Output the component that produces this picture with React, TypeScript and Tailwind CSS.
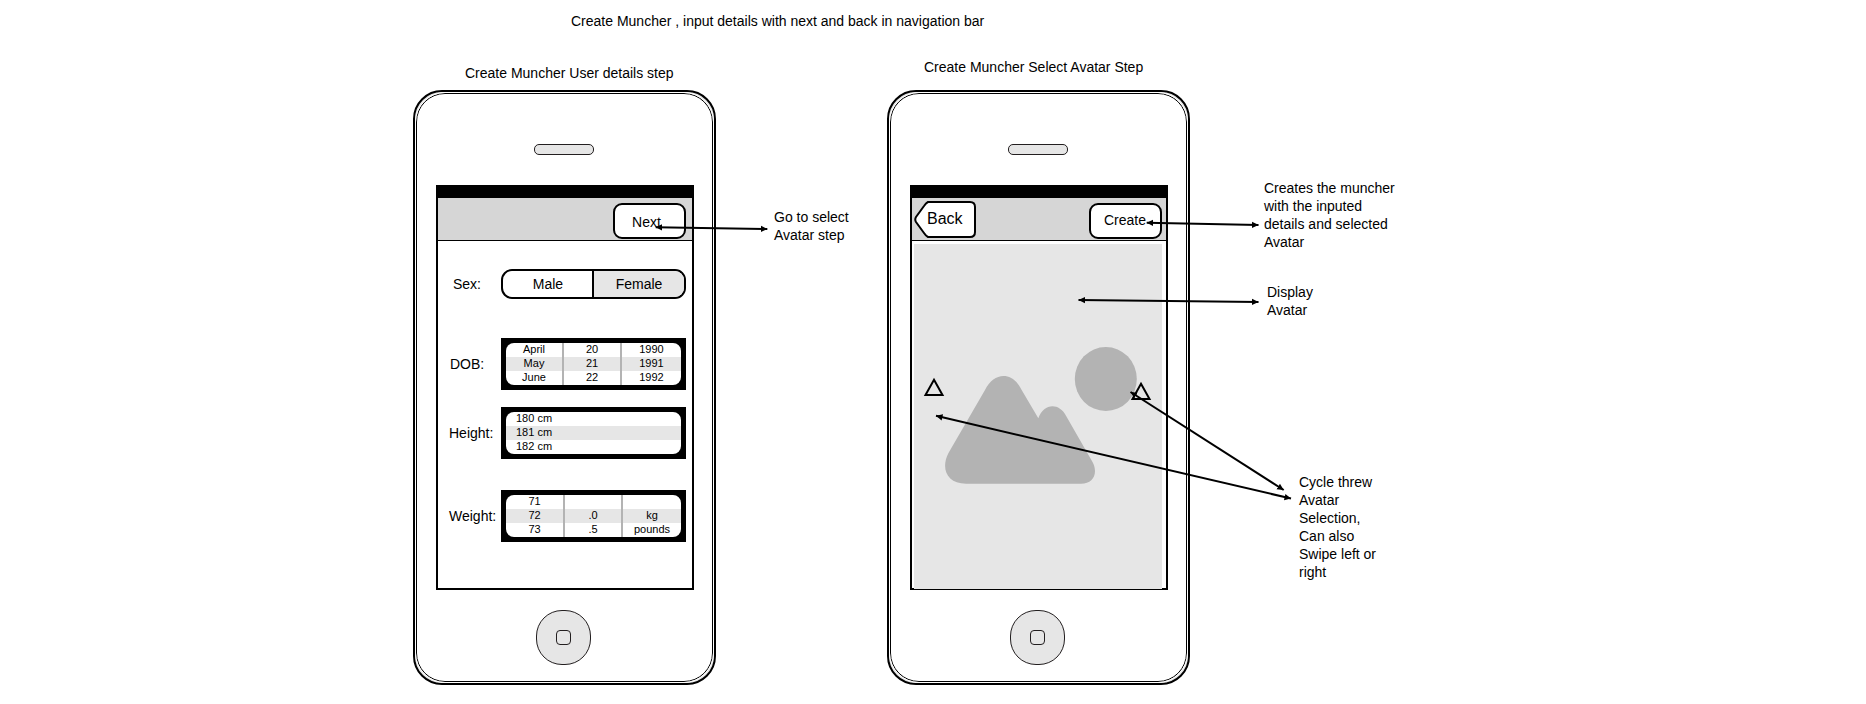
import type { ReactNode } from "react";

type Column = { width: string; align: string; values: string[] };

function Phone({ title, titleClass, children }: { title: string; titleClass: string; children: ReactNode }) {
  return (
    <section className="flex h-[627px] w-[303px] flex-col">
      <h2 className={"h-[18px] shrink-0 whitespace-nowrap " + titleClass}>{title}</h2>
      <div className="flex h-[595px] w-[303px] shrink-0 flex-col rounded-[29px] border-2 border-black bg-[#e6e6e6] p-px">
        <div className="flex flex-1 flex-col rounded-[29px] border border-black bg-white outline-1 outline-white">
          <div className="ml-[117px] mt-[50px] h-[11px] w-[60px] rounded-[5px] border border-[#231f20] bg-[#e6e6e6]" />
          <div className="ml-[19px] mt-[30px] flex h-[405px] w-[258px] flex-col border-2 border-black">
            <div className="h-[11px] shrink-0 bg-black" />
            {children}
          </div>
          <div className="ml-[119px] mt-[20px] flex size-[55px] items-center justify-center rounded-[26px] border border-[#231f20] bg-[#e6e6e6]">
            <div className="size-[15px] rounded-[4px] border border-[#231f20]" />
          </div>
        </div>
      </div>
    </section>
  );
}

function Row({ label, className, labelClass, children }: { label: string; className: string; labelClass: string; children: ReactNode }) {
  return (
    <div className={"flex shrink-0 items-center " + className}>
      <span className={"w-[63px] shrink-0 whitespace-nowrap " + labelClass}>{label}</span>
      {children}
    </div>
  );
}

function Picker({ columns }: { columns: Column[] }) {
  return (
    <div className="h-[52px] w-[185px] bg-black p-[5px]">
      <div className="flex h-[42px] overflow-hidden rounded-[8px] bg-white text-[11px] leading-[12px]">
        {columns.map((column, i) => (
          <div key={i} className={"shrink-0 border-[#b3b3b3] " + column.width + " " + column.align}>
            {column.values.map((value, j) => (
              <div key={j} className={j === 1 ? "h-[14px] bg-[#e6e6e6]" : "h-[14px]"}>
                {value}
              </div>
            ))}
          </div>
        ))}
      </div>
    </div>
  );
}

const dob: Column[] = [
  { width: "w-[58px] border-r-2", align: "text-center", values: ["April", "May", "June"] },
  { width: "w-[58px] border-r-2", align: "text-center", values: ["20", "21", "22"] },
  { width: "w-[59px]", align: "text-center", values: ["1990", "1991", "1992"] },
];
const height: Column[] = [
  { width: "w-[175px]", align: "indent-[10px]", values: ["180 cm", "181 cm", "182 cm"] },
];
const weight: Column[] = [
  { width: "w-[59px] border-r-2", align: "text-center", values: ["71", "72", "73"] },
  { width: "w-[58px] border-r-2", align: "text-center", values: ["", ".0", ".5"] },
  { width: "w-[58px]", align: "text-center", values: ["", "kg", "pounds"] },
];

const arrows = [
  [655.7, 227.3, 767.3, 229],
  [1146.7, 222.7, 1258.5, 225],
  [1078.5, 300, 1258.5, 302],
  [936, 415.8, 1291, 498.5],
  [1130.5, 392, 1283.7, 490],
];

function Arrows() {
  return (
    <svg className="pointer-events-none absolute left-0 top-0 z-20" width="1866" height="704">
      <defs>
        <marker id="head" markerUnits="userSpaceOnUse" markerWidth="7" markerHeight="8" refX="6.5" refY="4" orient="auto-start-reverse">
          <path d="M0 0.8L6.5 4L0 7.2Z" />
        </marker>
      </defs>
      {arrows.map(([x1, y1, x2, y2]) => (
        <line key={x1} x1={x1} y1={y1} x2={x2} y2={y2} stroke="#000" strokeWidth="2" markerStart="url(#head)" markerEnd="url(#head)" />
      ))}
    </svg>
  );
}

function AvatarImage() {
  return (
    <svg className="relative z-10 -mb-px ml-[2px] mt-[3px] shrink-0 bg-[#e6e6e6]" width="248" height="345" viewBox="914 244 248 345">
      <g fill="#b3b3b3">
        <ellipse cx="1105.8" cy="379" rx="31" ry="32" />
        <path
          transform="translate(880 330) scale(0.33333)"
          d="M258 461C200 461 182 415 205 370L315 180C342 124 399 124 425 180L475 265C491 218 538 218 558 257L638 397C655 430 640 461 603 461Z"
        />
      </g>
      <g fill="none" stroke="#000" strokeWidth="2">
        <path d="M934 379.8L942.5 395H925.5Z" />
        <path d="M1141 383.8L1149.5 399H1132.5Z" />
      </g>
    </svg>
  );
}

export default function App() {
  return (
    <main className="relative h-[704px] w-[1866px] overflow-hidden bg-white font-['Liberation_Sans',Arial,sans-serif] text-[14px] leading-[18px] text-black">
      <h1 className="ml-[571px] pt-[12px]">Create Muncher , input details with next and back in navigation bar</h1>

      <div className="ml-[413px] mt-[28px] flex gap-[171px]">
        <Phone title="Create Muncher User details step" titleClass="ml-[52px] mt-[6px] mb-[8px]">
          <div className="flex h-[43px] shrink-0 justify-end border-b border-black bg-[#d6d6d6] pr-[6px] pt-[5px]">
            <button className="h-[36px] w-[73px] rounded-[9px] border-2 border-black bg-white pr-[6px] pt-px">Next</button>
          </div>
          <Row label="Sex:" className="mt-[28px]" labelClass="pl-[15px]">
            <div className="flex h-[30px] w-[185px] overflow-hidden rounded-[11px] border-2 border-black leading-[26px]">
              <div className="w-[91px] border-r-2 border-black pl-px text-center">Male</div>
              <div className="flex-1 bg-[#e6e6e6] text-center">Female</div>
            </div>
          </Row>
          <Row label="DOB:" className="mt-[39px]" labelClass="pl-[12px]">
            <Picker columns={dob} />
          </Row>
          <Row label="Height:" className="mt-[17px]" labelClass="pl-[11px]">
            <Picker columns={height} />
          </Row>
          <Row label="Weight:" className="mt-[31px]" labelClass="pl-[11px]">
            <Picker columns={weight} />
          </Row>
        </Phone>

        <Phone title="Create Muncher Select Avatar Step" titleClass="ml-[37px] mb-[14px]">
          <div className="flex h-[43px] shrink-0 justify-between border-b border-black bg-[#d6d6d6] pl-[2px] pr-[4px]">
            <button className="relative mt-[3px] flex h-[37px] w-[62px] items-start pl-[13px] pt-[9px] text-[16px]">
              <svg className="absolute left-0 top-0" width="62" height="37">
                <path d="M14 1H56Q61 1 61 6V31Q61 36 56 36H14Q12 35 10 32L2 21Q0.5 18.5 2 16L10 5Q12 2 14 1Z" fill="#fff" stroke="#000" strokeWidth="2" />
              </svg>
              <span className="relative">Back</span>
            </button>
            <button className="mt-[5px] h-[36px] w-[73px] rounded-[9px] border-2 border-black bg-white pb-[2px] pr-px">Create</button>
          </div>
          <AvatarImage />
        </Phone>
      </div>

      <p className="absolute left-[774px] top-[208px] whitespace-nowrap">Go to select<br />Avatar step</p>
      <p className="absolute left-[1264px] top-[179px] whitespace-nowrap">Creates the muncher<br />with the inputed<br />details and selected<br />Avatar</p>
      <p className="absolute left-[1267px] top-[283px] whitespace-nowrap">Display<br />Avatar</p>
      <p className="absolute left-[1299px] top-[473px] whitespace-nowrap">Cycle threw<br />Avatar<br />Selection,<br />Can also<br />Swipe left or<br />right</p>
      <Arrows />
    </main>
  );
}
